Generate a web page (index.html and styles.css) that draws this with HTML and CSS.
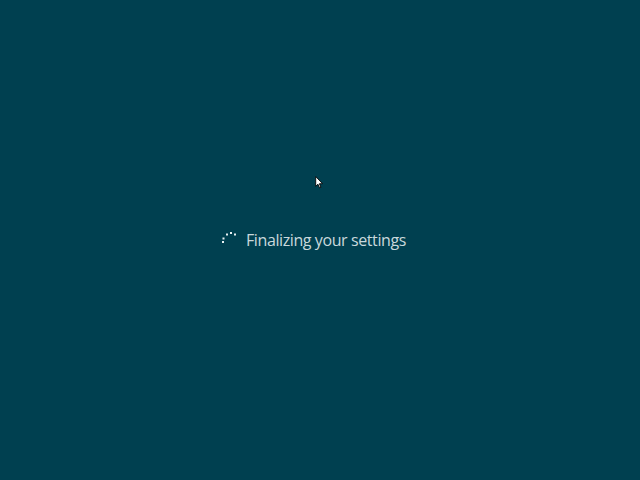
FILE: index.html
```html
<!DOCTYPE html>
<html>
<head>
<meta charset="utf-8">
<link rel="stylesheet" href="styles.css">
</head>
<body>
<main class="screen">
  <div class="status">
    <svg class="spinner" width="18" height="14" viewBox="0 0 18 14">
      <rect x="1" y="10" width="2" height="2" fill="#e8f0f2"/>
      <rect x="1.5" y="6.5" width="2" height="2" fill="#e8f0f2"/>
      <rect x="5" y="2.5" width="2" height="2" fill="#e8f0f2"/>
      <rect x="9" y="1" width="2" height="2" fill="#e8f0f2"/>
      <rect x="13" y="2.5" width="2" height="2" fill="#e8f0f2"/>
    </svg>
    <span class="label">Finalizing your settings</span>
  </div>
  <svg class="cursor" width="9" height="13" viewBox="0 0 8 12">
    <path d="M0.5 0.5 L0.5 9.5 L2.6 7.6 L4.1 11 L5.3 10.4 L3.9 7.1 L6.8 7.1 Z" fill="#fff" stroke="#000" stroke-width="0.8"/>
  </svg>
</main>
</body>
</html>
```
FILE: styles.css
```css
html, body {
  margin: 0;
  padding: 0;
  width: 640px;
  height: 480px;
  overflow: hidden;
  background: #004050;
}
.screen {
  position: relative;
  width: 640px;
  height: 480px;
  display: flex;
  justify-content: center;
  align-items: center;
}
.status {
  display: flex;
  align-items: center;
  gap: 7px;
  margin-left: -13px;
  margin-top: 0;
}
.spinner {
  display: block;
  margin-top: -5px;
}
.label {
  font-family: "Open Sans", "Noto Sans", sans-serif;
  font-size: 16px;
  color: #c9d8dc;
  letter-spacing: -0.4px;
}
.cursor {
  position: absolute;
  left: 315px;
  top: 176px;
}
```
